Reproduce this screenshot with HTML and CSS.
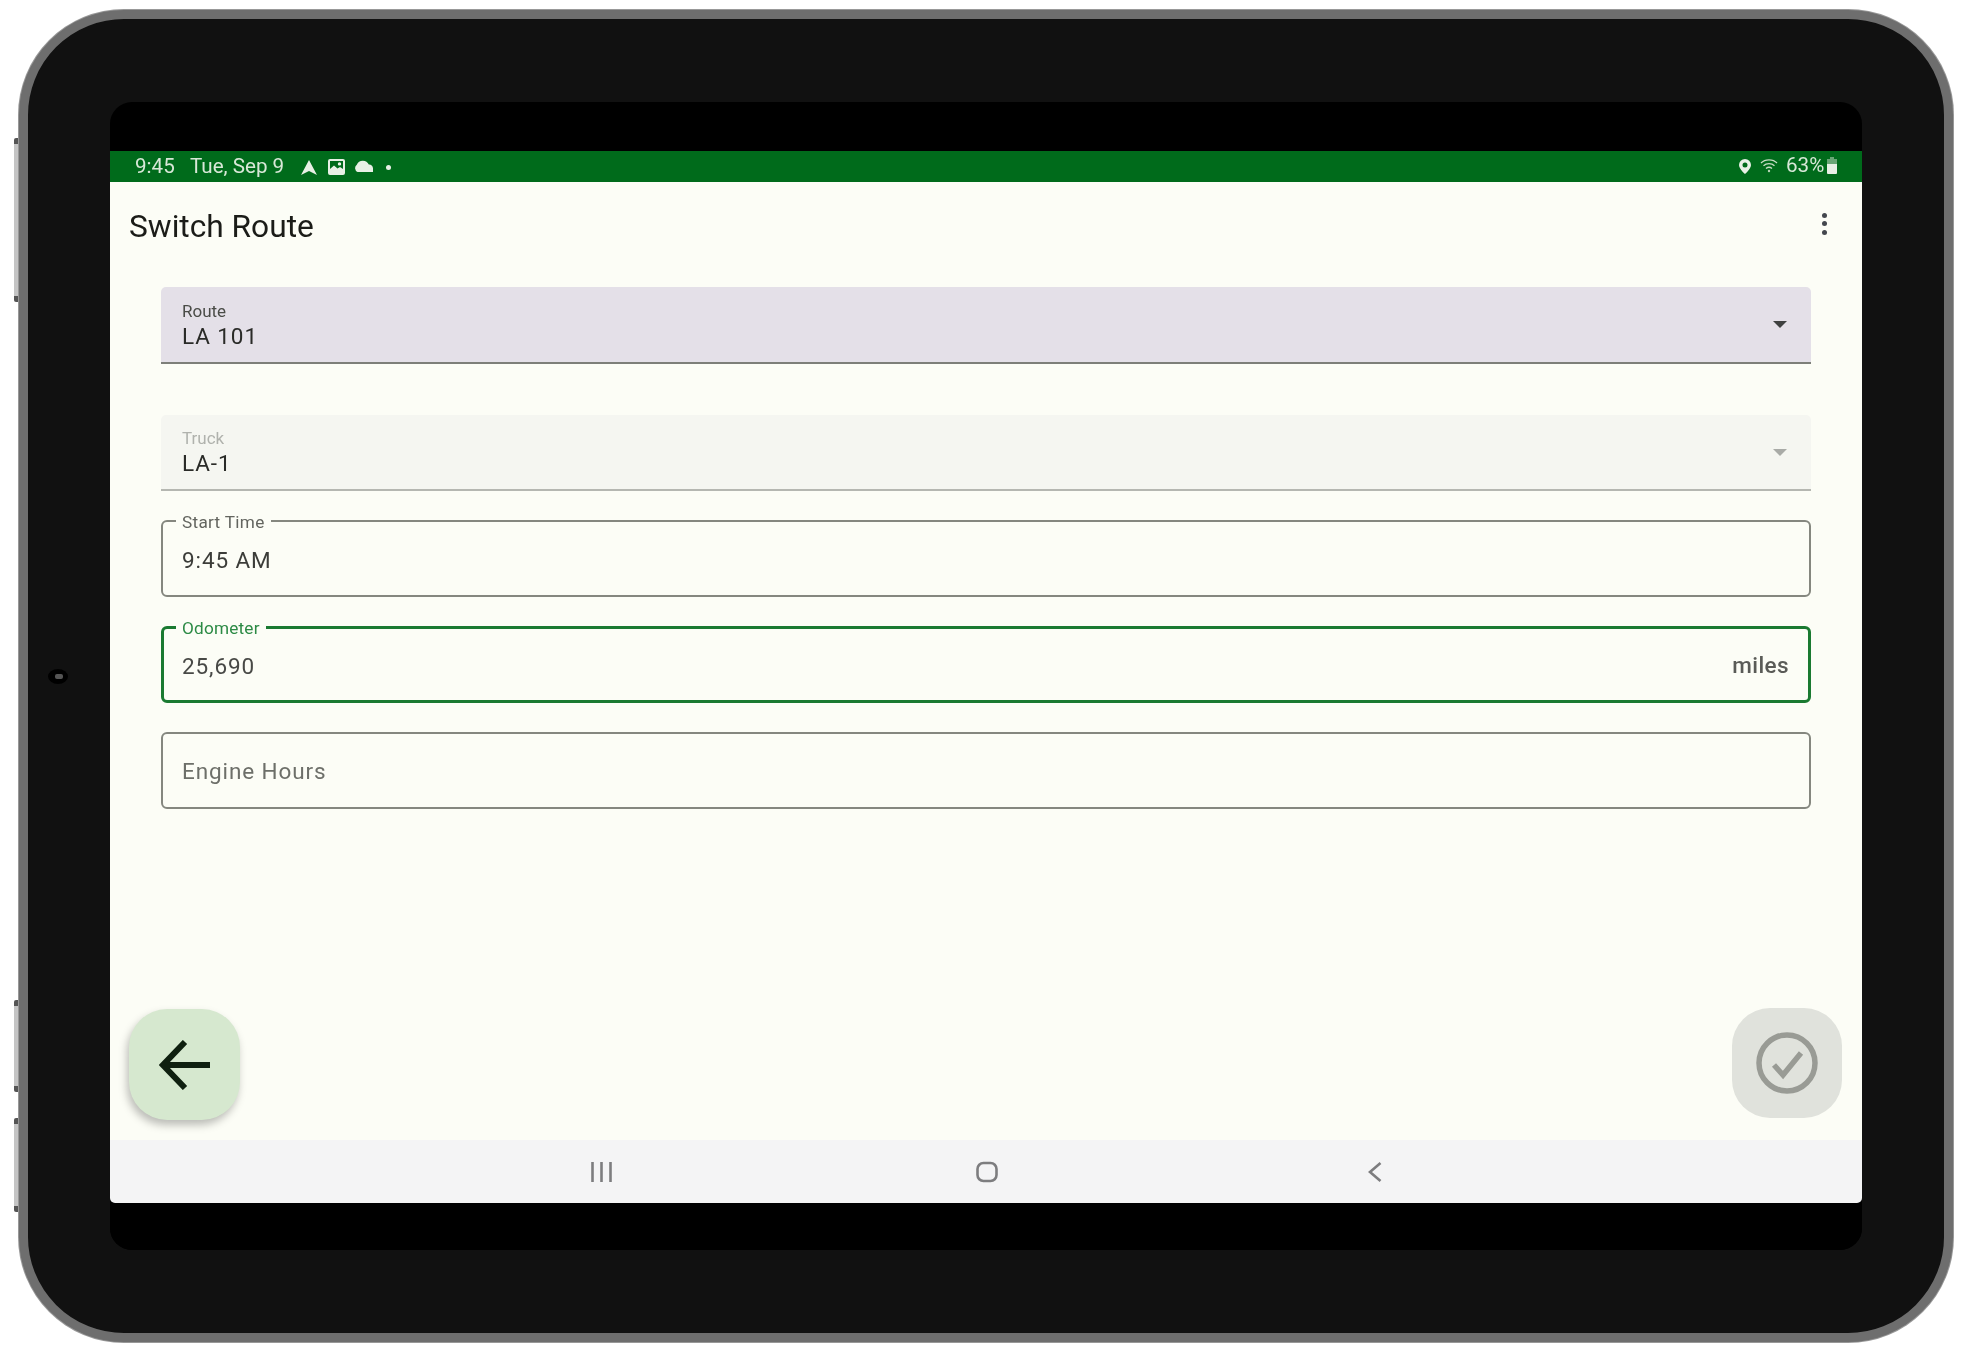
FILE: index.html
```html
<!DOCTYPE html>
<html lang="en">
<head>
<meta charset="utf-8">
<title>Switch Route</title>
<link rel="stylesheet" href="styles.css">
</head>
<body>
<div class="device">
  <span class="side-btn side-a"></span>
  <span class="side-btn side-b"></span>
  <span class="side-btn side-c"></span>
  <span class="camera"></span>
  <div class="screen">
    <div class="status">
      <span class="clock">9:45</span>
      <span class="date">Tue, Sep 9</span>
      <svg class="ic-nav" viewBox="0 0 16 15"><path d="M8 0 16 15 8 11 0 15Z"/></svg>
      <svg class="ic-img" viewBox="0 0 17 16"><path fill-rule="evenodd" d="M2 0H15a2 2 0 0 1 2 2V14a2 2 0 0 1-2 2H2a2 2 0 0 1-2-2V2a2 2 0 0 1 2-2ZM2 2V10L6 6.500 9.500 9.500 12 8 15 10V2ZM11.500 3.200a1.700 1.700 0 1 1 0 3.400 1.700 1.700 0 0 1 0-3.400Z"/></svg>
      <svg class="ic-cloud" viewBox="0 0 20 12"><path d="M4.500 12A4.300 4.300 0 0 1 3.800 4.700 6.500 6.500 0 0 1 15.800 4.600 3.800 3.800 0 0 1 20 8.300V12Z"/></svg>
      <span class="dot"></span>
      <span class="status-right">
        <svg class="ic-pin" viewBox="0 0 12 15"><path fill-rule="evenodd" d="M6 0a6 6 0 0 1 6 6C12 10 6 15 6 15S0 10 0 6a6 6 0 0 1 6-6ZM6 3.500a2.500 2.500 0 1 0 0 5 2.500 2.500 0 0 0 0-5Z"/></svg>
        <svg class="ic-wifi" viewBox="0 0 20 15"><path d="M1 5C5 .8 13 .8 17 5M3.500 7.800C6.500 5 11.500 5 14.500 7.800M6 10.500C7.800 9 10.200 9 12 10.500"/><circle cx="9" cy="13" r="1.200"/></svg>
        <span class="battery-pct">63%</span>
        <svg class="ic-batt" viewBox="0 0 10 17"><path class="batt-empty" d="M3 0H7V2H10V7H0V2H3Z"/><path d="M0 7H10V16a1 1 0 0 1-1 1H1a1 1 0 0 1-1-1Z"/></svg>
      </span>
    </div>
    <main class="app">
      <header class="topbar">
        <h1 class="title">Switch Route</h1>
        <span class="kebab"><i></i><i></i><i></i></span>
      </header>
      <form class="form">
        <div class="filled route">
          <div class="filled-text">
            <span class="filled-label">Route</span>
            <span class="value">LA 101</span>
          </div>
          <svg class="caret" viewBox="0 0 14 7"><path d="M0 0H14L7 7Z"/></svg>
        </div>
        <div class="filled truck">
          <div class="filled-text">
            <span class="filled-label">Truck</span>
            <span class="value">LA-1</span>
          </div>
          <svg class="caret" viewBox="0 0 14 7"><path d="M0 0H14L7 7Z"/></svg>
        </div>
        <div class="outlined">
          <span class="notch">Start Time</span>
          <span class="value">9:45 AM</span>
        </div>
        <div class="outlined focused">
          <span class="notch">Odometer</span>
          <span class="value odo">25,690</span>
          <span class="suffix">miles</span>
        </div>
        <div class="outlined">
          <span class="value placeholder">Engine Hours</span>
        </div>
      </form>
      <div class="fabs">
        <div class="fab fab-back">
          <svg viewBox="0 0 52 50"><path d="M51 25H4M26 2 4 25 26 48"/></svg>
        </div>
        <div class="fab fab-done">
          <svg viewBox="0 0 62 62"><circle cx="31" cy="31" r="28"/><path d="M18 33 27 43 45 21"/></svg>
        </div>
      </div>
    </main>
    <nav class="navbar">
      <svg class="nav-recents" viewBox="0 0 21 20"><path d="M1.500 0V20M10.500 0V20M19.500 0V20"/></svg>
      <svg class="nav-home" viewBox="0 0 22 22"><rect x="1.500" y="2" width="19" height="18" rx="6"/></svg>
      <svg class="nav-back" viewBox="0 0 14 20"><path d="M12.500 1 2 10 12.500 19"/></svg>
    </nav>
    <div class="chin"></div>
  </div>
</div>
</body>
</html>
```

FILE: styles.css
```css
* { box-sizing: border-box; }
html, body { margin: 0; height: 100%; background: #fff; }
body {
  padding: 10px 11px 12px 19px;
  font-family: Roboto, "Liberation Sans", sans-serif;
  overflow: hidden;
}
.device {
  position: relative;
  width: 1934px;
  height: 1332px;
  padding: 83px 81px 83px 82px;
  background: #111;
  border: 9px solid #6e6e6e;
  border-radius: 105px;
  box-shadow: 0 0 0 1px #989898;
  filter: blur(0.45px);
}
.side-btn {
  position: absolute;
  left: -14px;
  width: 4px;
  background: #c4c4c4;
  border-top: 6px solid #555;
  border-bottom: 6px solid #555;
  border-radius: 2px 0 0 2px;
}
.side-a { top: 119px; height: 164px; }
.side-b { top: 981px; height: 92px; }
.side-c { top: 1099px; height: 94px; }
.camera {
  position: absolute;
  left: 20px;
  top: 650px;
  width: 20px;
  height: 15px;
  border-radius: 50%;
  background: #000;
}
.camera::after {
  content: "";
  position: absolute;
  left: 7px;
  top: 5px;
  width: 8px;
  height: 5px;
  border-radius: 2px;
  background: #555;
}
.screen {
  display: flex;
  flex-direction: column;
  width: 1752px;
  height: 1148px;
  background: #000;
  border-radius: 22px;
  overflow: hidden;
  padding-top: 49px;
}
.status {
  display: flex;
  align-items: center;
  flex: 0 0 31px;
  padding: 0 25px;
  background: #006b1b;
  color: #d8e8d8;
  font-size: 20.600px;
  line-height: 31px;
}
.status svg { fill: #e8f0e6; display: block; }
.clock { width: 39px; margin: -1px 16px 0 0; }
.date { width: 93px; white-space: nowrap; margin: -1px 18px 0 0; }
.ic-nav { width: 16px; height: 15px; margin-right: 11px; margin-top: 1px; }
.ic-img { width: 17px; height: 16px; margin-right: 8px; margin-top: 1px; }
.ic-cloud { width: 20px; height: 12px; margin-right: 13px; margin-top: -1px; }
.dot { width: 5px; height: 5px; border-radius: 50%; background: #e8f0e6; margin-top: 1px; }
.status-right { display: flex; align-items: center; margin-left: auto; margin-top: -3px; }
.ic-pin { width: 12px; height: 15px; margin-right: 9px; margin-top: 2px; }
.status .ic-wifi { width: 20px; height: 15px; margin-right: 6px; fill: #b9d4b9; }
.ic-wifi path { fill: none; stroke: #c6dcc4; stroke-width: 1.3; }
.battery-pct { width: 37px; white-space: nowrap; margin-right: 4px; }
.ic-batt { width: 10px; height: 17px; }
.batt-empty { opacity: .45; }
.app {
  flex: 1;
  display: flex;
  flex-direction: column;
  background: #fcfdf6;
}
.topbar {
  display: flex;
  align-items: center;
  justify-content: space-between;
  height: 105px;
  padding: 0 35px 16px 19px;
}
.title {
  margin: 0;
  font-size: 31.700px;
  font-weight: 400;
  color: #1b1c18;
  line-height: 44px;
}
.kebab {
  display: flex;
  flex-direction: column;
  gap: 3.500px;
  margin-bottom: 6px;
}
.kebab i { width: 5px; height: 5px; border-radius: 50%; background: #44474e; }
.form {
  display: flex;
  flex-direction: column;
  gap: 29px;
  padding: 0 51px;
}
.filled {
  display: flex;
  align-items: center;
  justify-content: space-between;
  height: 77px;
  padding: 0 24px 0 21px;
  border-bottom: 2px solid #7d7f79;
  border-radius: 5px 5px 0 0;
}
.route { background: #e4e0e8; margin-bottom: 22px; }
.truck { height: 76px; background: #f5f6f1; border-bottom-color: #b5b7b1; }
.filled-text { display: flex; flex-direction: column; }
.route .filled-text { margin-top: 2px; }
.filled-label { font-size: 17px; line-height: 20px; color: #4a4c47; }
.truck .filled-label { color: #b0b2ad; }
.value {
  font-size: 22.500px;
  line-height: 28px;
  letter-spacing: .9px;
  color: #2a2b28;
  margin-top: 1px;
}
.caret { width: 14px; height: 7px; fill: #3f4140; margin-bottom: 0; }
.truck .caret { fill: #a9aba7; }
.outlined {
  position: relative;
  display: flex;
  align-items: center;
  justify-content: space-between;
  height: 77px;
  padding: 0 19px;
  border: 2px solid #85877f;
  border-radius: 6px;
}
.outlined .value { margin: 2px 0 0; color: #3c3d39; }
.outlined .placeholder { margin: 0; }
.notch {
  position: absolute;
  left: 13px;
  top: -10px;
  padding: 0 6px;
  background: #fcfdf6;
  font-size: 17.200px;
  line-height: 20px;
  letter-spacing: .3px;
  color: #63655f;
}
.focused { border: 3px solid #1a7a31; padding: 0 19px 0 18px; }
.focused .notch { left: 12px; top: -11px; color: #2c8a45; letter-spacing: .2px; }
.focused .value { color: #484946; }
.placeholder { color: #6d6f69 !important; }
.suffix { font-size: 22.500px; font-weight: 500; letter-spacing: .4px; color: #5a5b57; }
.fabs {
  display: flex;
  align-items: flex-start;
  justify-content: space-between;
  margin-top: auto;
  padding: 0 20px 20px 19px;
}
.fab {
  display: flex;
  align-items: center;
  justify-content: center;
  width: 111px;
  height: 111px;
  border-radius: 38px;
}
.fab-back {
  margin-top: 1px;
  background: #d6e8cf;
  box-shadow: -2px 5px 8px rgba(0, 0, 0, .26);
}
.fab-back svg { width: 52px; height: 50px; fill: none; stroke: #0f2010; stroke-width: 6; }
.fab-done { width: 110px; height: 110px; background: #e0e2dc; }
.fab-done svg { width: 62px; height: 62px; fill: none; stroke: #999b95; stroke-width: 5.500; }
.navbar {
  position: relative;
  flex: 0 0 63px;
  background: #f4f4f5;
  display: flex;
  align-items: center;
  padding-left: 481px;
  border-radius: 0 0 5px 5px;
}
.navbar svg { display: block; fill: none; stroke: #7d7d7f; stroke-width: 2.600; }
.nav-recents { width: 21px; height: 20px; }
.nav-home { width: 22px; height: 22px; margin-left: 364px; }
.nav-back { width: 14px; height: 20px; margin-left: 370px; }
.chin { flex: 0 0 47px; background: #000; }
```
